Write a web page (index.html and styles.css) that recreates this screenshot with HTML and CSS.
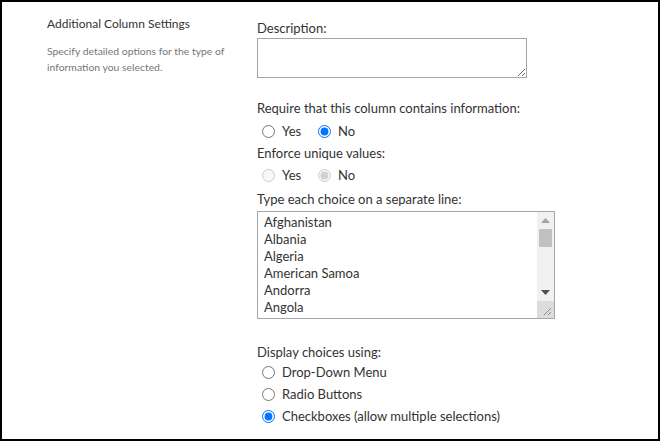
FILE: index.html
```html
<!DOCTYPE html>
<html>
<head>
<meta charset="utf-8">
<link rel="stylesheet" href="styles.css">
</head>
<body>
<div class="frame">
  <div class="side">
    <div class="side-title">Additional Column Settings</div>
    <div class="side-desc">Specify detailed options for the type of information you selected.</div>
  </div>
  <div class="main">
    <div class="label label-desc">Description:</div>
    <textarea class="desc-box"></textarea>

    <div class="label label-require">Require that this column contains information:</div>
    <div class="radio-row row-require">
      <label class="opt-inline"><input type="radio" name="req"><span>Yes</span></label>
      <label class="opt-inline"><input type="radio" name="req" checked><span>No</span></label>
    </div>

    <div class="label label-unique">Enforce unique values:</div>
    <div class="radio-row row-unique">
      <label class="opt-inline"><input type="radio" name="uniq" disabled><span>Yes</span></label>
      <label class="opt-inline"><input type="radio" name="uniq" checked disabled><span>No</span></label>
    </div>

    <div class="label label-choices">Type each choice on a separate line:</div>
    <div class="listbox">
      <div class="list-lines">
        <div>Afghanistan</div>
        <div>Albania</div>
        <div>Algeria</div>
        <div>American Samoa</div>
        <div>Andorra</div>
        <div>Angola</div>
      </div>
      <div class="sbar">
        <div class="sbar-track">
          <svg class="arrow-up" width="9" height="5" viewBox="0 0 9 5"><polygon points="0,5 9,5 4.5,0" fill="#a3a3a3"/></svg>
          <div class="thumb"></div>
          <div class="track-fill"></div>
          <svg class="arrow-down" width="9" height="5" viewBox="0 0 9 5"><polygon points="0,0 9,0 4.5,5" fill="#505050"/></svg>
        </div>
        <div class="corner">
          <svg width="17" height="17" viewBox="0 0 17 17"><line x1="14" y1="7" x2="7" y2="14" stroke="#8a8a8a" stroke-width="1"/><line x1="14" y1="11" x2="11" y2="14" stroke="#8a8a8a" stroke-width="1"/></svg>
        </div>
      </div>
    </div>

    <div class="label label-display">Display choices using:</div>
    <div class="radio-row"><label class="opt"><input type="radio" name="disp"><span>Drop-Down Menu</span></label></div>
    <div class="radio-row"><label class="opt"><input type="radio" name="disp"><span>Radio Buttons</span></label></div>
    <div class="radio-row"><label class="opt"><input type="radio" name="disp" checked><span>Checkboxes (allow multiple selections)</span></label></div>
  </div>
</div>
</body>
</html>
```
FILE: styles.css
```css
html, body {
  margin: 0;
  padding: 0;
  background: #fff;
}
.frame {
  box-sizing: border-box;
  width: 660px;
  height: 441px;
  border: 2px solid #000;
  display: flex;
  font-family: "Lato", "Open Sans", sans-serif;
  color: #333;
  font-size: 13px;
}
.side {
  width: 210px;
  padding-left: 45px;
  padding-top: 13px;
  flex-shrink: 0;
}
.side-title {
  font-size: 12px;
  line-height: 18px;
  color: #333;
}
.side-desc {
  margin-top: 10px;
  font-size: 10.4px;
  line-height: 16px;
  color: #777;
  width: 185px;
}
.main {
  display: flex;
  flex-direction: column;
  align-items: flex-start;
}
.label {
  line-height: 18px;
  white-space: nowrap;
}
.label-desc { margin-top: 17px; }
.desc-box {
  display: block;
  box-sizing: border-box;
  margin: 1px 0 0 0;
  width: 270px;
  height: 40px;
  border: 1px solid #a6a6a6;
  border-radius: 0;
  padding: 2px 6px;
  font-family: inherit;
  font-size: 13px;
  outline: none;
}
.label-require { margin-top: 21px; }
.radio-row {
  height: 22px;
  display: flex;
  align-items: center;
}
.row-require { margin-top: 3px; }
.label-unique { margin-top: 2px; }
.row-unique { margin-top: 2px; }
.label-choices { margin-top: 4px; }
.opt-inline, .opt {
  display: flex;
  align-items: center;
  line-height: 18px;
}
.opt-inline { width: 56px; }
.radio-row input[type=radio] {
  margin: 0 7px 0 5px;
  width: 13px;
  height: 13px;
}

.listbox {
  margin-top: 3px;
  box-sizing: border-box;
  width: 298px;
  height: 108px;
  border: 1px solid #a6a6a6;
  display: flex;
}
.list-lines {
  flex: 1;
  padding: 2px 0 0 6px;
  line-height: 17px;
  overflow: hidden;
}
.sbar {
  width: 17px;
  display: flex;
  flex-direction: column;
}
.sbar-track {
  flex: 1;
  background: #f1f1f1;
  display: flex;
  flex-direction: column;
  align-items: center;
}
.arrow-up { margin-top: 6px; }
.thumb {
  margin-top: 6px;
  width: 13px;
  height: 18px;
  background: #c1c1c1;
}
.track-fill { flex: 1; }
.arrow-down { margin-bottom: 6px; }
.corner {
  height: 17px;
  background: #dcdcdc;
}
.corner svg { display: block; }
.label-display { margin-top: 24px; }
```
